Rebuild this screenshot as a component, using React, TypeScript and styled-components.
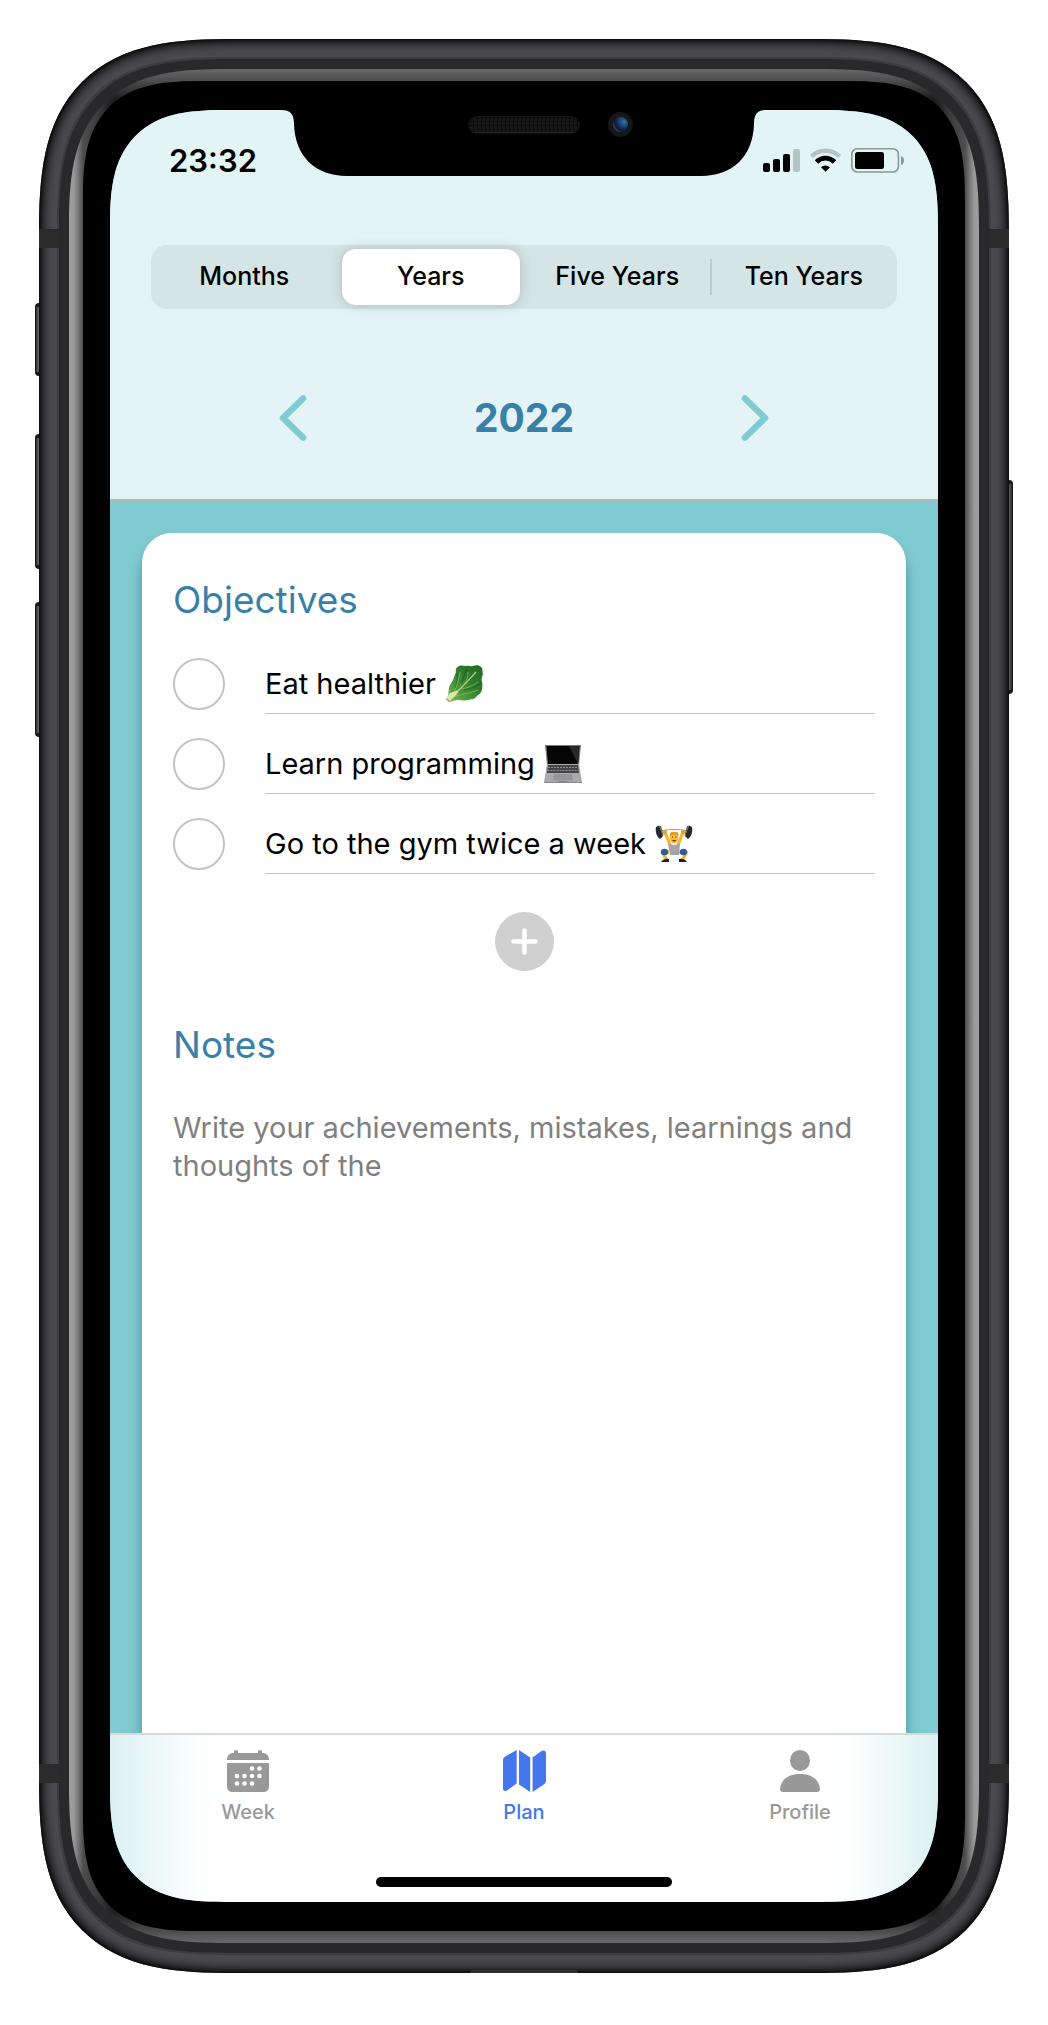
import React, { useState } from "react";
import styled, { createGlobalStyle, css } from "styled-components";

const color = {
  accent: "#3980a8",
  teal: "#80cbd1",
  header: "#e3f3f6",
  status: "#e2f5f4",
  line: "#c4c4c4",
  idle: "#999999",
  active: "#4477ee",
};

const GlobalStyle = createGlobalStyle`
  * { box-sizing: border-box; }
  body {
    margin: 0;
    background: #fff;
    font-family: Inter, "Liberation Sans", sans-serif;
    color: #000;
  }
  button, input, textarea { font: inherit; color: inherit; }
  button { border: 0; padding: 0; background: none; cursor: pointer; }
`;

/* Rounded corner with a continuous curve where the browser offers one. */
const corner = (round: number, smooth: number) => css`
  border-radius: ${round}px;
  @supports (corner-shape: superellipse(1.5)) {
    border-radius: ${smooth}px;
    corner-shape: superellipse(1.5);
  }
`;

/* ---------- Device ---------- */

const Page = styled.div`
  display: flex;
  min-height: 100vh;
  padding: 39px 39px 52px;
`;

const Body = styled.div`
  position: relative;
  display: flex;
  flex: 1;
  min-width: 0;
`;

const Shell = styled.div`
  position: relative;
  display: flex;
  flex: 1;
  min-width: 0;
  padding: 20px;
  background: #4b4a4f;
  box-shadow: inset 0 0 12px 3px #000, inset 0 0 4px #000;
  ${corner(146, 198)}
`;

const Band = styled.div`
  display: flex;
  flex: 1;
  min-width: 0;
  padding: 10px;
  background: #29292b;
  box-shadow: 0 0 0 2px #3d3c41;
  ${corner(126, 172)}
`;

const Metal = styled.div`
  display: flex;
  flex: 1;
  min-width: 0;
  padding: 12px 14px;
  background:
    linear-gradient(to right, #a0a0a0 0, #989898 5px, #4e4e4e 14px, #333 34px, transparent 46px),
    linear-gradient(to left, #a0a0a0 0, #989898 5px, #4e4e4e 14px, #333 34px, transparent 46px),
    linear-gradient(to bottom, #696969 0, #4c4c4c 12px, #000 42px, #000 calc(100% - 42px), #4c4c4c calc(100% - 12px), #696969 100%);
  ${corner(116, 160)}
`;

const Bezel = styled.div`
  display: flex;
  flex: 1;
  min-width: 0;
  padding: 29px 27px;
  background: #000;
  ${corner(88, 120)}
`;

const Screen = styled.div`
  position: relative;
  display: flex;
  flex: 1;
  flex-direction: column;
  min-width: 0;
  overflow: hidden;
  background: ${color.teal};
  ${corner(86, 118)}
`;

const SideKey = styled.span<{ $side: "left" | "right"; $top: number; $height: number }>`
  position: absolute;
  top: ${(p) => p.$top}px;
  ${(p) => p.$side}: -4px;
  width: 8px;
  height: ${(p) => p.$height}px;
  border: solid #17171a;
  border-width: 4px 1px;
  border-radius: 4px;
  background: linear-gradient(to right, #2e2e32, #65656a 40%, #55555a 60%, #29292c);
`;

const Antenna = styled.span<{ $side: "left" | "right"; $edge: "top" | "bottom" }>`
  position: absolute;
  ${(p) => p.$edge}: 190px;
  ${(p) => p.$side}: 0;
  width: 20px;
  height: 19px;
  background: #2b2b2b;
`;

const Port = styled.span`
  position: absolute;
  bottom: 0;
  left: calc(50% - 54px);
  width: 108px;
  height: 3px;
  border-radius: 8px 8px 0 0;
  background: #2d2d2f;
`;

const NotchArt = styled.svg`
  position: absolute;
  top: 0;
  left: calc(50% - 242px);
`;

/* ---------- Top of the screen ---------- */

const StatusBar = styled.div`
  display: flex;
  align-items: flex-start;
  justify-content: space-between;
  height: 97px;
  padding: 32px 33px 0 59px;
  background: ${color.status};
`;

const Clock = styled.time`
  font-size: 31px;
  font-weight: 600;
  line-height: 38px;
`;

const StatusArt = styled.svg`
  margin-top: 6px;
`;

const Header = styled.header`
  padding: 38px 41px 58px;
  border-bottom: 2px solid #b0b9ba;
  background: ${color.header};
`;

const Segments = styled.div`
  display: grid;
  grid-template-columns: repeat(4, 1fr);
  height: 64px;
  padding: 4px 0;
  border-radius: 16px;
  background: #d5e4e4;
`;

const Segment = styled.button<{ $on: boolean; $ruled: boolean }>`
  position: relative;
  margin: 0 4px;
  padding-bottom: 2px;
  border-radius: 14px;
  font-size: 25px;
  font-weight: 500;
  white-space: nowrap;
  ${(p) => p.$on && css`
    background: #fff;
    box-shadow: 0 0 12px rgba(60, 90, 110, 0.28);
  `}
  ${(p) => p.$ruled && css`
    &::before {
      content: "";
      position: absolute;
      top: 10px;
      bottom: 10px;
      left: -5px;
      width: 2px;
      background: #bccbcb;
    }
  `}
`;

const Pager = styled.div`
  display: flex;
  align-items: center;
  justify-content: space-between;
  margin-top: 86px;
  padding: 0 128px;
`;

const PagerButton = styled.button`
  display: flex;
  color: ${color.teal};
`;

const Year = styled.h1`
  margin: 0;
  font-size: 39px;
  font-weight: 700;
  line-height: 46px;
  color: ${color.accent};
`;

/* ---------- Card ---------- */

const Main = styled.main`
  display: flex;
  flex: 1;
  flex-direction: column;
  overflow: hidden;
  padding: 32px 32px 0;
`;

const Card = styled.section`
  display: flex;
  flex: 1;
  flex-direction: column;
  padding: 43px 31px 0;
  border-radius: 30px 30px 0 0;
  background: #fff;
  box-shadow: 0 12px 14px rgba(0, 50, 60, 0.36);
`;

const Title = styled.h2`
  margin: 0;
  font-size: 37px;
  font-weight: 400;
  line-height: 48px;
  color: ${color.accent};
`;

const List = styled.ul`
  display: grid;
  gap: 23px;
  margin: 33px 0 0;
  padding: 0;
  list-style: none;
`;

const Item = styled.li`
  display: flex;
  gap: 40px;
  height: 57px;
`;

const Tick = styled.input`
  appearance: none;
  width: 52px;
  height: 52px;
  margin: 1px 0 0;
  border: 2px solid #c4c4c4;
  border-radius: 50%;
  cursor: pointer;
  &:checked { background: ${color.teal}; }
`;

const ItemLabel = styled.label`
  display: flex;
  flex: 1;
  align-items: center;
  gap: 9px;
  padding-bottom: 3px;
  border-bottom: 1px solid ${color.line};
  font-size: 29px;
`;

const AddButton = styled.button`
  display: flex;
  align-items: center;
  justify-content: center;
  align-self: center;
  width: 59px;
  height: 59px;
  margin: 38px 0 50px;
  border-radius: 50%;
  background: #d0d0d0;
`;

const NotesLabel = styled.label`
  display: block;
`;

const Notes = styled.textarea`
  flex: 1;
  min-height: 200px;
  margin-top: 40px;
  padding: 0;
  border: 0;
  outline: 0;
  resize: none;
  background: none;
  font-size: 29px;
  line-height: 38px;
  &::placeholder { color: #808080; opacity: 1; }
`;

/* ---------- Tab bar ---------- */

const Footer = styled.footer`
  padding: 15px 0;
  border-top: 2px solid #d6dadb;
  background: linear-gradient(
    to right,
    #dcf0f3 0,
    #e8f6f6 32px,
    #fbfdfd 80px,
    #fff 110px,
    #fff calc(100% - 110px),
    #fbfdfd calc(100% - 80px),
    #e8f6f6 calc(100% - 32px),
    #dcf0f3 100%
  );
`;

const Tabs = styled.nav`
  display: grid;
  grid-template-columns: repeat(3, 1fr);
`;

const Tab = styled.a<{ $on?: boolean }>`
  display: flex;
  flex-direction: column;
  align-items: center;
  gap: 8px;
  font-size: 20px;
  font-weight: 500;
  line-height: 24px;
  text-decoration: none;
  color: ${(p) => (p.$on ? color.active : color.idle)};
`;

const HomeBar = styled.div`
  width: 296px;
  height: 10px;
  margin: 53px auto 0;
  border-radius: 5px;
  background: #000;
`;

/* ---------- Drawings ---------- */

const Notch = () => (
  <NotchArt width="484" height="66" viewBox="0 0 484 66" aria-hidden="true">
    <defs>
      <pattern id="mesh" width="4" height="4" patternUnits="userSpaceOnUse">
        <rect width="4" height="4" fill="#0d0d0d" />
        <rect width="3" height="3" fill="#171717" />
      </pattern>
      <radialGradient id="lens" cx="0.75" cy="0.3" r="0.8">
        <stop offset="0" stopColor="#2a6fae" />
        <stop offset="0.4" stopColor="#1b4679" />
        <stop offset="0.8" stopColor="#0d1730" />
        <stop offset="1" stopColor="#24507f" />
      </radialGradient>
    </defs>
    <path d="M0 0C9 0 12 5 12 14C13 47 34 66 65 66H419C450 66 471 47 472 14C472 5 475 0 484 0Z" fill="#000" />
    <rect x="186" y="6" width="112" height="18" rx="9" fill="url(#mesh)" />
    <path d="M192 22.500H292" stroke="#202020" />
    <circle cx="338.500" cy="14.500" r="12.500" fill="#161616" />
    <circle cx="338.500" cy="14.500" r="7.500" fill="url(#lens)" />
  </NotchArt>
);

const StatusIcons = () => (
  <StatusArt width="142" height="25" viewBox="0 0 142 25" role="img" aria-label="Signal, Wi-Fi, battery">
    <rect x="0" y="15" width="7" height="9" rx="2" />
    <rect x="10" y="11" width="7" height="13" rx="2" />
    <rect x="20" y="6" width="7" height="18" rx="2" />
    <rect x="30" y="1" width="7" height="23" rx="2" fill="#b5c4c3" />
    <path d="M48.500 8.500A20 20 0 0 1 76.500 8.500" fill="none" stroke="#b5c4c3" strokeWidth="4.500" />
    <path d="M53.500 14A12.600 12.600 0 0 1 71.500 14" fill="none" stroke="#000" strokeWidth="4.800" />
    <path d="M58 19.200A6.500 6.500 0 0 1 67 19.200L62.500 23.700Z" />
    <rect x="88.800" y="0.800" width="46.600" height="23.200" rx="5.500" fill="none" stroke="#8b9695" strokeWidth="1.600" />
    <rect x="92" y="4" width="29" height="17" rx="2.500" />
    <path d="M138 8C142 9.500 142 15.500 138 17Z" fill="#8b9695" />
  </StatusArt>
);

const Chevron = ({ flip }: { flip?: boolean }) => (
  <svg width="28" height="46" viewBox="0 0 28 46" fill="none" stroke="currentColor" strokeWidth="6.500" strokeLinecap="round" strokeLinejoin="round" aria-hidden="true">
    <path d={flip ? "M4 3.500L24 23L4 42.500" : "M24 3.500L4 23L24 42.500"} />
  </svg>
);

const Lettuce = () => (
  <svg width="38" height="38" viewBox="0 0 38 38" role="img" aria-label="leafy green">
    <defs>
      <linearGradient id="leaf" x1="0" y1="1" x2="1" y2="0">
        <stop offset="0" stopColor="#8fbf5c" />
        <stop offset="0.300" stopColor="#4d9a3c" />
        <stop offset="0.600" stopColor="#2f7d2c" />
        <stop offset="1" stopColor="#22681f" />
      </linearGradient>
    </defs>
    <path d="M2 33C4 30 3 27 4 24C4 20 7 18 8 15C9 12 10 10 11 7C10 4 12 2 14 1C17 0 19 1 21 1C23 0 26 2 28 1C31 0 34 0 36 2C38 3 37 6 38 9C37 12 36 14 37 17C38 20 37 22 37 25C36 28 34 29 32 31C29 35 26 34 23 35C19 36 16 35 13 35C10 35 8 36 5 37Z" fill="url(#leaf)" />
    <path d="M22 3C21 8 18 12 17 17M12 8C13 13 12 18 10 23M36 18C31 22 25 24 19 25" fill="none" stroke="#1a531b" strokeWidth="1.400" opacity="0.450" />
    <path d="M5 33C15 25 22 17 31 7" fill="none" stroke="#b4d98a" strokeWidth="1.200" />
    <path d="M9 28C11 22 14 15 15 7M8 32C17 29 26 28 33 25M19 19C22 16 23 12 23 7M16 24C22 23 28 21 33 17" fill="none" stroke="#8cc465" strokeWidth="0.700" />
    <path d="M1 34L5 28L8 27L14 25L12 29L8 33L4 37Z" fill="#dbe8b0" />
    <path d="M0.500 34L2 33L5 36L4 37.500Z" fill="#c2a87a" />
  </svg>
);

const Laptop = () => (
  <svg width="38" height="38" viewBox="0 0 38 38" role="img" aria-label="laptop">
    <path d="M1 0H37L35 20H3Z" fill="#77777a" />
    <path d="M2.500 1H35.500L34 19H4Z" fill="#050505" />
    <path d="M25 1H35.500L34 19Z" fill="#29292b" />
    <path d="M3 19H35L38 37H0Z" fill="#aaaaac" />
    <path d="M4 20H34L35 28H3Z" fill="#454547" />
    <path d="M4 22.500H34M3.500 25.500H34.500" stroke="#8d8d90" strokeWidth="1" strokeDasharray="2 1" />
    <path d="M10 29H28L29 35.500H9Z" fill="#959597" />
    <path d="M0 37H14L15 36H23L24 37H38V38H0Z" fill="#858588" />
  </svg>
);

const Lifter = () => (
  <svg width="38" height="38" viewBox="0 0 38 38" role="img" aria-label="person lifting weights">
    <path d="M4 6Q19 3 34 6" fill="none" stroke="#8a8f94" strokeWidth="1.200" />
    <path d="M10 7L15 20M28 7L23 20" stroke="#f3b52f" strokeWidth="3.200" strokeLinecap="round" />
    <circle cx="10" cy="7" r="2.200" fill="#e9a223" />
    <circle cx="28" cy="7" r="2.200" fill="#e9a223" />
    <path d="M13 18Q19 22 25 18L24 30H15Z" fill="#a4a6aa" />
    <path d="M14 27L8 28L12 36M24 27L31 28L27 36" fill="none" stroke="#f3b52f" strokeWidth="3.500" />
    <ellipse cx="9.500" cy="27" rx="3.600" ry="3.200" fill="#2f5d9c" />
    <ellipse cx="28.500" cy="27" rx="3.600" ry="3.200" fill="#2f5d9c" />
    <path d="M6 37Q9 33 14 34V37ZM32 37Q29 33 24 34V37Z" fill="#182331" />
    <ellipse cx="19" cy="13" rx="4.300" ry="5.500" fill="#f6bd35" />
    <path d="M14.500 11Q15 6 19 7Q24 6 23.500 11Q20 8.500 14.500 11Z" fill="#e39c1b" />
    <path d="M17 12H18M20.500 12H21.500" stroke="#4a2d12" strokeWidth="1.200" />
    <path d="M17 15Q19 18 21.500 15Z" fill="#7b2f18" />
    <path d="M1 2L4 0.500L8 11L5 14C2 12 0 7 1 2ZM37 2L34 0.500L30 11L33 14C36 12 38 7 37 2Z" fill="#25272b" />
    <path d="M4 0.500L6 1L8.500 10L8 11ZM34 0.500L32 1L29.500 10L30 11Z" fill="#5b5e63" />
  </svg>
);

const CalendarIcon = () => (
  <svg width="42" height="42" viewBox="0 0 42 42" fill="currentColor" aria-hidden="true">
    <path d="M7 3V1.500Q7 0 9 0T11 1.500V3H31V1.500Q31 0 33 0T35 1.500V3C39.500 3 42 5.500 42 10H0C0 5.500 2.500 3 7 3Z" />
    <path d="M0 13H42V36Q42 42 36 42H6Q0 42 0 36Z" />
    <g fill="#fff">
      {[[25, 18.500], [32.500, 18.500], [10, 26], [17.500, 26], [25, 26], [32.500, 26], [10, 33.500], [17.500, 33.500], [25, 33.500]].map(([x, y]) => (
        <circle key={`${x}-${y}`} cx={x} cy={y} r="2.300" />
      ))}
    </g>
  </svg>
);

const MapIcon = () => (
  <svg width="43" height="42" viewBox="0 0 43 42" fill="currentColor" aria-hidden="true">
    <path d="M0 10Q0 8 1.500 7L13.700 0V33.500L4 40.500Q0.500 42 0 39Z" />
    <path d="M16 0L27.200 7.500V42L16 34.500Z" />
    <path d="M29.600 7.500L38.500 1Q42.500 -0.500 43 3V31Q43 33 41.500 34L29.600 42Z" />
  </svg>
);

const PersonIcon = () => (
  <svg width="40" height="42" viewBox="0 0 40 42" fill="currentColor" aria-hidden="true">
    <ellipse cx="20" cy="10.500" rx="10" ry="10.500" />
    <path d="M3 42Q0 42 0 39C1 29 9 24 20 24S39 29 40 39Q40 42 37 42Z" />
  </svg>
);

const PlusIcon = () => (
  <svg width="27" height="27" viewBox="0 0 27 27" stroke="#fff" strokeWidth="4.500" strokeLinecap="round" aria-hidden="true">
    <path d="M13.500 2.500V24.500M2.500 13.500H24.500" />
  </svg>
);

/* ---------- App ---------- */

const spans = ["Months", "Years", "Five Years", "Ten Years"];

const objectives = [
  { id: "eat", text: "Eat healthier", Art: Lettuce },
  { id: "learn", text: "Learn programming", Art: Laptop },
  { id: "gym", text: "Go to the gym twice a week", Art: Lifter },
];

export default function App() {
  const [span, setSpan] = useState(1);
  const [year, setYear] = useState(2022);

  return (
    <>
      <GlobalStyle />
      <Page>
        <Body>
          <SideKey $side="left" $top={264} $height={73} />
          <SideKey $side="left" $top={395} $height={135} />
          <SideKey $side="left" $top={563} $height={135} />
          <SideKey $side="right" $top={441} $height={214} />
          <Shell>
            <Antenna $side="left" $edge="top" />
            <Antenna $side="right" $edge="top" />
            <Antenna $side="left" $edge="bottom" />
            <Antenna $side="right" $edge="bottom" />
            <Port />
            <Band>
              <Metal>
                <Bezel>
                  <Screen>
                    <StatusBar>
                      <Clock>23:32</Clock>
                      <StatusIcons />
                    </StatusBar>
                    <Notch />
                    <Header>
                      <Segments>
                        {spans.map((name, i) => (
                          <Segment
                            key={name}
                            type="button"
                            aria-pressed={i === span}
                            $on={i === span}
                            $ruled={i > 0 && i !== span && i - 1 !== span}
                            onClick={() => setSpan(i)}
                          >
                            {name}
                          </Segment>
                        ))}
                      </Segments>
                      <Pager>
                        <PagerButton type="button" aria-label="Previous year" onClick={() => setYear(year - 1)}>
                          <Chevron />
                        </PagerButton>
                        <Year>{year}</Year>
                        <PagerButton type="button" aria-label="Next year" onClick={() => setYear(year + 1)}>
                          <Chevron flip />
                        </PagerButton>
                      </Pager>
                    </Header>
                    <Main>
                      <Card>
                        <Title>Objectives</Title>
                        <List>
                          {objectives.map(({ id, text, Art }) => (
                            <Item key={id}>
                              <Tick type="checkbox" id={id} />
                              <ItemLabel htmlFor={id}>
                                {text}
                                <Art />
                              </ItemLabel>
                            </Item>
                          ))}
                        </List>
                        <AddButton type="button" aria-label="Add objective">
                          <PlusIcon />
                        </AddButton>
                        <Title>
                          <NotesLabel htmlFor="notes">Notes</NotesLabel>
                        </Title>
                        <Notes
                          id="notes"
                          placeholder="Write your achievements, mistakes, learnings and thoughts of the"
                        />
                      </Card>
                    </Main>
                    <Footer>
                      <Tabs>
                        <Tab href="#week">
                          <CalendarIcon />
                          Week
                        </Tab>
                        <Tab href="#plan" $on aria-current="page">
                          <MapIcon />
                          Plan
                        </Tab>
                        <Tab href="#profile">
                          <PersonIcon />
                          Profile
                        </Tab>
                      </Tabs>
                      <HomeBar />
                    </Footer>
                  </Screen>
                </Bezel>
              </Metal>
            </Band>
          </Shell>
        </Body>
      </Page>
    </>
  );
}
